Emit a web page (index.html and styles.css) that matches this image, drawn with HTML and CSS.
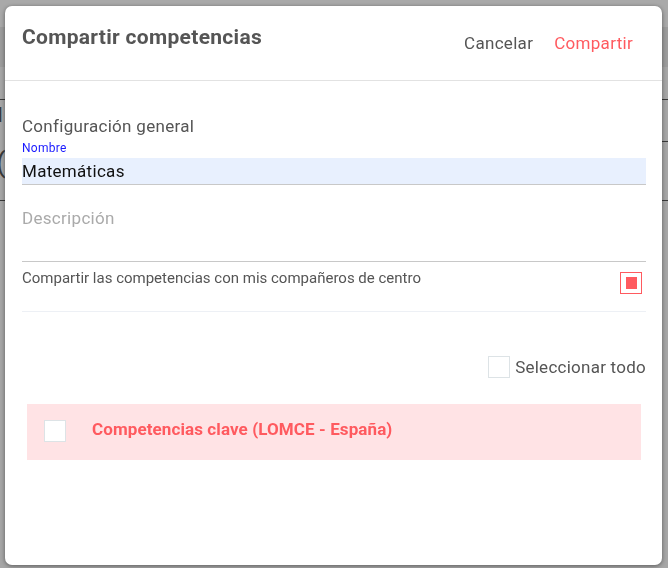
FILE: index.html
```html
<!DOCTYPE html>
<html lang="es">
<head>
  <meta charset="UTF-8">
  <meta name="viewport" content="width=device-width,initial-scale=1.0">
  <title>Compartir competencias</title>
  <link rel="stylesheet" href="styles.css">
</head>
<body>
  <div class="page">
    <div class="page-top"></div>
    <div class="page-bar"></div>
    <div class="page-row first"></div>
    <div class="page-row second">
      <span class="page-letter">d</span>
      <span class="page-paren">(</span>
      <span class="page-mark"></span>
    </div>
  </div>

  <div class="overlay">
    <div class="dialog">
      <div class="dialog-header">
        <h1>Compartir competencias</h1>
        <div class="actions">
          <button type="button" class="btn-cancel">Cancelar</button>
          <button type="button" class="btn-share">Compartir</button>
        </div>
      </div>

      <div class="dialog-body">
        <h2>Configuración general</h2>

        <label class="field-label" for="nombre">Nombre</label>
        <input type="text" id="nombre" class="field-input" value="Matemáticas">

        <textarea class="field-area" placeholder="Descripción"></textarea>

        <div class="share-row">
          <span>Compartir las competencias con mis compañeros de centro</span>
          <span class="check check-on"><span class="check-fill"></span></span>
        </div>

        <div class="select-all">
          <span class="check"></span>
          <span>Seleccionar todo</span>
        </div>

        <div class="comp-card">
          <span class="check"></span>
          <span class="comp-title">Competencias clave (LOMCE - España)</span>
        </div>
      </div>
    </div>
  </div>
</body>
</html>
```

FILE: styles.css
```css
*
{
  box-sizing:border-box;
}
body
{
  margin:0;
  font-family:Roboto,"Liberation Sans",sans-serif;
  letter-spacing:0.3px;
  background-color:#a6a6a6;
  height:568px;
  overflow:hidden;
}
.page-top
{
  height:27px;
  background-color:#a9a9a9;
}
.page-bar
{
  height:40px;
  background-color:#9c9c9c;
}
.page-row
{
  border-bottom:1px solid #3a3a3a;
}
.page-row.first
{
  height:33px;
}
.page-row.second
{
  height:101px;
  display:flex;
  flex-direction:column;
  align-items:flex-start;
  overflow:hidden;
}
.page-letter
{
  font-size:20px;
  font-weight:bold;
  color:#3a3a3a;
  margin:4px 0 0 -9px;
  line-height:22px;
}
.page-paren
{
  font-size:28px;
  color:#3a3a3a;
  margin:22px 0 0 -4px;
  line-height:30px;
}
.page-mark
{
  align-self:flex-end;
  width:6px;
  margin-top:-37px;
  border-top:1px solid #3a3a3a;
}
.overlay
{
  position:fixed;
  top:0;
  left:0;
  width:100%;
  height:100%;
  padding:6px 5px 0 5px;
}
.dialog
{
  width:657px;
  height:559px;
  background-color:#fff;
  border-radius:7px;
  box-shadow:0 1px 4px rgba(0,0,0,0.45);
}
.dialog-header
{
  height:75px;
  border-bottom:1px solid #e2e2e2;
  display:flex;
  justify-content:space-between;
  padding:0 29px 0 17px;
}
.dialog-header h1
{
  margin:19px 0 0 0;
  font-size:21px;
  font-weight:bold;
  color:#555;
  line-height:24px;
}
.actions
{
  display:flex;
  gap:21px;
  padding-top:26px;
}
.actions button
{
  background:none;
  border:none;
  padding:0;
  font-family:inherit;
  letter-spacing:inherit;
  font-size:17px;
  line-height:22px;
  height:22px;
  cursor:pointer;
}
.btn-cancel
{
  color:#555;
}
.btn-share
{
  color:#ff5a5f;
}
.dialog-body
{
  padding:34px 16px 0 17px;
}
.dialog-body h2
{
  margin:0;
  font-size:17px;
  font-weight:normal;
  color:#555;
  line-height:22px;
}
.field-label
{
  display:block;
  font-size:12px;
  color:#1a1aff;
  line-height:14px;
  margin-top:4px;
}
.field-input
{
  display:block;
  width:100%;
  height:27px;
  margin-top:3px;
  border:none;
  border-bottom:1px solid #c8c8c8;
  background-color:#e8f0fe;
  font-family:inherit;
  letter-spacing:inherit;
  font-size:17px;
  color:#111;
  padding:0;
  outline:none;
}
.field-area
{
  display:block;
  width:100%;
  height:77px;
  border:none;
  border-bottom:1px solid #c8c8c8;
  resize:none;
  font-family:inherit;
  letter-spacing:inherit;
  font-size:17px;
  padding:23px 0 0 0;
  outline:none;
}
.field-area::placeholder
{
  color:#aaa;
}
.share-row
{
  display:flex;
  justify-content:space-between;
  height:50px;
  border-bottom:1px solid #edf0f5;
  padding:7px 4px 0 0;
  font-size:15px;
  letter-spacing:0;
  color:#555;
}
.check
{
  display:inline-flex;
  align-items:center;
  justify-content:center;
  width:22px;
  height:22px;
  border:1px solid #dde3e6;
  background-color:#fff;
  flex-shrink:0;
}
.check-on
{
  border-color:#ff5a5f;
  margin-top:3px;
}
.check-fill
{
  width:11px;
  height:12px;
  background-color:#ff5a5f;
}
.select-all
{
  display:flex;
  justify-content:flex-end;
  align-items:center;
  gap:5px;
  margin-top:44px;
  font-size:17px;
  letter-spacing:0.25px;
  color:#555;
}
.comp-card
{
  display:flex;
  align-items:center;
  gap:26px;
  height:56px;
  margin:26px 5px 0 5px;
  padding-left:17px;
  background-color:#ffe3e5;
}
.comp-card .check
{
  margin-top:-3px;
}
.comp-title
{
  font-size:17px;
  font-weight:bold;
  letter-spacing:0.1px;
  color:#ff5a5f;
  margin-top:-7px;
}
```
